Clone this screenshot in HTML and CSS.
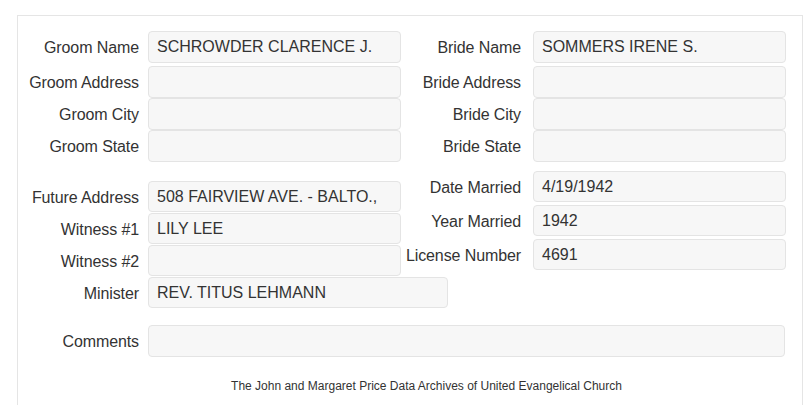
FILE: index.html
```html
<!DOCTYPE html>
<html>
<head>
<meta charset="utf-8">
<title>Marriage Record</title>
<link rel="stylesheet" href="styles.css">
</head>
<body>
<div class="panel">
  <div class="section section--names">
    <div class="col col--left">
      <div class="row row--first"><label class="label">Groom Name</label><div class="field">SCHROWDER CLARENCE J.</div></div>
      <div class="row"><label class="label">Groom Address</label><div class="field"></div></div>
      <div class="row"><label class="label">Groom City</label><div class="field"></div></div>
      <div class="row"><label class="label">Groom State</label><div class="field"></div></div>
    </div>
    <div class="col col--right">
      <div class="row row--first"><label class="label">Bride Name</label><div class="field">SOMMERS IRENE S.</div></div>
      <div class="row"><label class="label">Bride Address</label><div class="field"></div></div>
      <div class="row"><label class="label">Bride City</label><div class="field"></div></div>
      <div class="row"><label class="label">Bride State</label><div class="field"></div></div>
    </div>
  </div>

  <div class="section section--details">
    <div class="col col--left col--offset">
      <div class="row"><label class="label">Future Address</label><div class="field field--short">508 FAIRVIEW AVE. - BALTO.,</div></div>
      <div class="row"><label class="label">Witness #1</label><div class="field field--short">LILY LEE</div></div>
      <div class="row"><label class="label">Witness #2</label><div class="field field--short"></div></div>
      <div class="row"><label class="label">Minister</label><div class="field field--short field--wide">REV. TITUS LEHMANN</div></div>
    </div>
    <div class="col col--right col--spaced">
      <div class="row"><label class="label">Date Married</label><div class="field field--short">4/19/1942</div></div>
      <div class="row"><label class="label">Year Married</label><div class="field field--short">1942</div></div>
      <div class="row"><label class="label">License Number</label><div class="field field--short">4691</div></div>
    </div>
  </div>

  <div class="row row--comments"><label class="label">Comments</label><div class="field field--full"></div></div>

  <p class="footer">The John and Margaret Price Data Archives of United Evangelical Church</p>
</div>
</body>
</html>
```

FILE: styles.css
```css
html, body {
  margin: 0;
  padding: 0;
  background: #ffffff;
}

body {
  font-family: "Liberation Sans", Arial, sans-serif;
  color: #333333;
  font-size: 16px;
  overflow: hidden;
}

.panel {
  margin: 15px 0 0 17px;
  width: 786px;
  height: 390px;
  border: 1px solid #e5e5e5;
  border-bottom: none;
  padding-top: 15px;
  box-sizing: border-box;
}

.section {
  display: flex;
}

.col {
  display: flex;
  flex-direction: column;
}

.col--left {
  width: 383px;
  flex-shrink: 0;
}

.col--right {
  width: 385px;
  flex-shrink: 0;
}

.col--right .label {
  width: 120px;
  margin-right: 12px;
}

.row {
  display: flex;
  align-items: center;
}

.row--first {
  margin-bottom: 3px;
}

.label {
  flex-shrink: 0;
  width: 121px;
  margin-right: 9px;
  text-align: right;
  white-space: nowrap;
  line-height: 18px;
  padding-top: 2px;
  letter-spacing: -0.1px;
}

.field {
  flex-shrink: 0;
  width: 253px;
  height: 32px;
  box-sizing: border-box;
  background: #f7f7f7;
  border: 1px solid #e4e4e4;
  border-radius: 4px;
  padding: 0 8px;
  line-height: 30px;
  white-space: nowrap;
  overflow: hidden;
  color: #333333;
}

.field--short {
  height: 31px;
  line-height: 29px;
}

.field--wide {
  width: 300px;
}

.field--full {
  width: 637px;
}

.section--details {
  margin-top: 9px;
}

.col--offset {
  padding-top: 10px;
  gap: 1px;
}

.col--spaced {
  gap: 3px;
}

.row--comments {
  margin-top: 17px;
}

.footer {
  margin: 22px 0 0 33px;
  text-align: center;
  font-size: 12px;
  line-height: 14px;
  color: #333333;
}
```
